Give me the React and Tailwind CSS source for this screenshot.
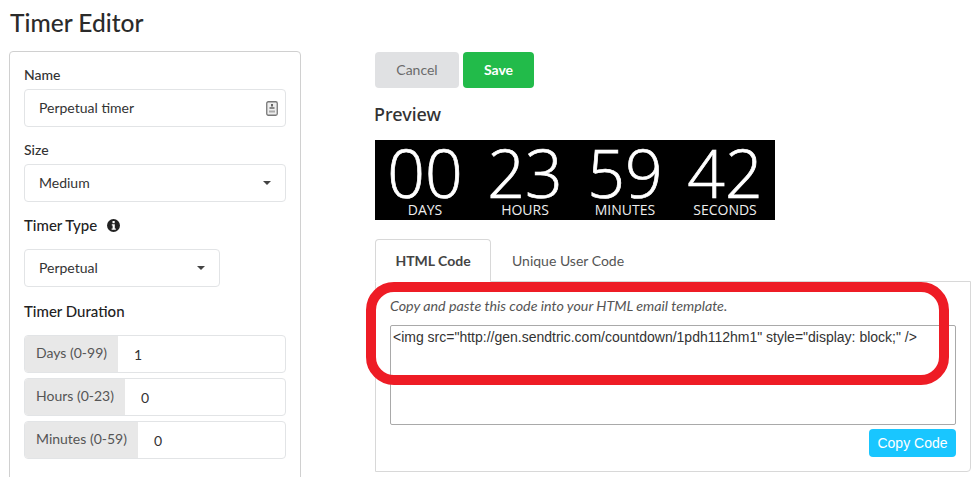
import React from "react";

function Caret() {
  return <span className="w-0 h-0 border-x-[4px] border-x-transparent border-t-[4px] border-t-[#444]" />;
}

function Field({ label, value }) {
  return (
    <div className="flex h-[38px] rounded border border-[#e2e4e6] overflow-hidden bg-white">
      <div className="flex items-center bg-[#e8e8e8] pl-[11px] pr-[11px] pb-[3px] text-[14px] text-[#555]">{label}</div>
      <div className="flex items-center pl-[16px] text-[14px] text-[#333]">{value}</div>
    </div>
  );
}

function Unit({ n, label }) {
  return (
    <div className="w-[100px] flex flex-col items-center">
      <div className="h-[61px] leading-[64px] text-[66px] font-light [-webkit-text-stroke:0.7px_white] text-white font-['Open_Sans',sans-serif]">{n}</div>
      <div className="text-[14px] leading-[17px] text-[#eee] font-['Open_Sans',sans-serif]">{label}</div>
    </div>
  );
}

export default function App() {
  return (
    <div className="relative w-[979px] h-[477px] overflow-hidden bg-white font-['Lato',sans-serif] text-[#333]">
      <h1 className="pl-[10px] pt-[7px] h-[51px] text-[24.5px] leading-[32px] font-medium text-[#2b2b2b]">Timer Editor</h1>
      <div className="flex">
        <div className="ml-[9px] w-[292px] h-[440px] shrink-0 rounded border border-[#d0d0d0] px-[14px] pt-[13px]">
          <div className="text-[14px] leading-[20px] font-medium text-[#333]">Name</div>
          <div className="mt-[4px] h-[38px] rounded border border-[#e2e4e6] flex items-center justify-between pl-[14px] pr-[7px]">
            <span className="text-[14px] text-[#333] pb-[2px]">Perpetual timer</span>
            <svg width="12" height="15" viewBox="0 0 12 15">
              <rect x="0.75" y="0.75" width="10.5" height="13.5" rx="1.5" fill="#eee" stroke="#777" strokeWidth="1.3" />
              <rect x="5" y="3" width="2" height="2.5" fill="#666" />
              <rect x="3.5" y="6" width="5" height="2" fill="#888" />
              <rect x="3" y="9.5" width="6" height="2" fill="#aaa" />
            </svg>
          </div>
          <div className="mt-[13px] text-[14px] leading-[20px] font-medium text-[#333]">Size</div>
          <div className="mt-[4px] h-[38px] rounded border border-[#e2e4e6] flex items-center justify-between pl-[14px] pr-[14px]">
            <span className="text-[14px] text-[#333] pb-[2px]">Medium</span>
            <Caret />
          </div>
          <div className="mt-[12px] flex items-center text-[15px] leading-[22px] font-medium text-[#222]">
            Timer Type
            <svg className="ml-[10px]" width="13" height="13" viewBox="0 0 13 13">
              <circle cx="6.5" cy="6.5" r="6.5" fill="#222" />
              <rect x="5.5" y="2" width="2.2" height="2.2" fill="#fff" />
              <path d="M4.8 5.2h3v4.2h1v1.3H4.6V9.4h1V6.5h-.8z" fill="#fff" />
            </svg>
          </div>
          <div className="mt-[13px] w-[196px] h-[38px] rounded border border-[#e2e4e6] flex items-center justify-between pl-[14px] pr-[14px]">
            <span className="text-[14px] text-[#333] pb-[2px]">Perpetual</span>
            <Caret />
          </div>
          <div className="mt-[13px] text-[15px] leading-[22px] font-medium text-[#222]">Timer Duration</div>
          <div className="mt-[13px] flex flex-col gap-[5px]">
            <Field label="Days (0-99)" value="1" />
            <Field label="Hours (0-23)" value="0" />
            <Field label="Minutes (0-59)" value="0" />
          </div>
        </div>

        <div className="ml-[74px] w-[581px] shrink-0 pt-[1px]">
          <div className="flex gap-[4px]">
            <button className="w-[84px] h-[36px] rounded bg-[#e0e1e3] pb-[2px] text-[14px] text-[#6b6b6b]">Cancel</button>
            <button className="w-[71px] h-[36px] rounded bg-[#22bb4a] pb-[2px] text-[14px] font-bold text-white">Save</button>
          </div>
          <h2 className="mt-[14px] -ml-[1px] text-[18px] leading-[24px] font-medium text-[#333] font-['Noto_Sans',sans-serif]">Preview</h2>
          <div className="mt-[14px] w-[400px] h-[80px] bg-black flex">
            <Unit n="00" label="DAYS" />
            <Unit n="23" label="HOURS" />
            <Unit n="59" label="MINUTES" />
            <Unit n="42" label="SECONDS" />
          </div>
          <div className="mt-[19px] flex h-[42px]">
            <div className="relative z-10 w-[116px] h-[43px] rounded-t border border-[#d8d8d8] border-b-white bg-white flex items-center justify-center text-[14px] font-bold text-[#444]">HTML Code</div>
            <div className="ml-[21px] h-[42px] flex items-center text-[14px] text-[#555]">Unique User Code</div>
          </div>
          <div className="w-[596px] h-[191px] rounded-br border border-[#d8d8d8] px-[14px] pt-[14px]">
            <div className="text-[14.25px] leading-[20px] italic text-[#555]">Copy and paste this code into your HTML email template.</div>
            <div className="mt-[9px] h-[100px] rounded-[2px] border border-[#a9a9a9] px-[2px] pt-[1px] text-[14px] leading-[20px] text-[#333] font-['Liberation_Sans',sans-serif]">
              {'<img src="http://gen.sendtric.com/countdown/1pdh112hm1" style="display: block;" />'}
            </div>
            <div className="mt-[4px] flex justify-end">
              <button className="w-[87px] h-[28px] rounded bg-[#19c6ff] text-[14px] text-white font-['Liberation_Sans',sans-serif]">Copy Code</button>
            </div>
          </div>
        </div>
      </div>
      <div className="absolute left-[366px] top-[282px] w-[583px] h-[103px] rounded-[28px] border-[10px] border-[#ee1c25]" />
    </div>
  );
}
